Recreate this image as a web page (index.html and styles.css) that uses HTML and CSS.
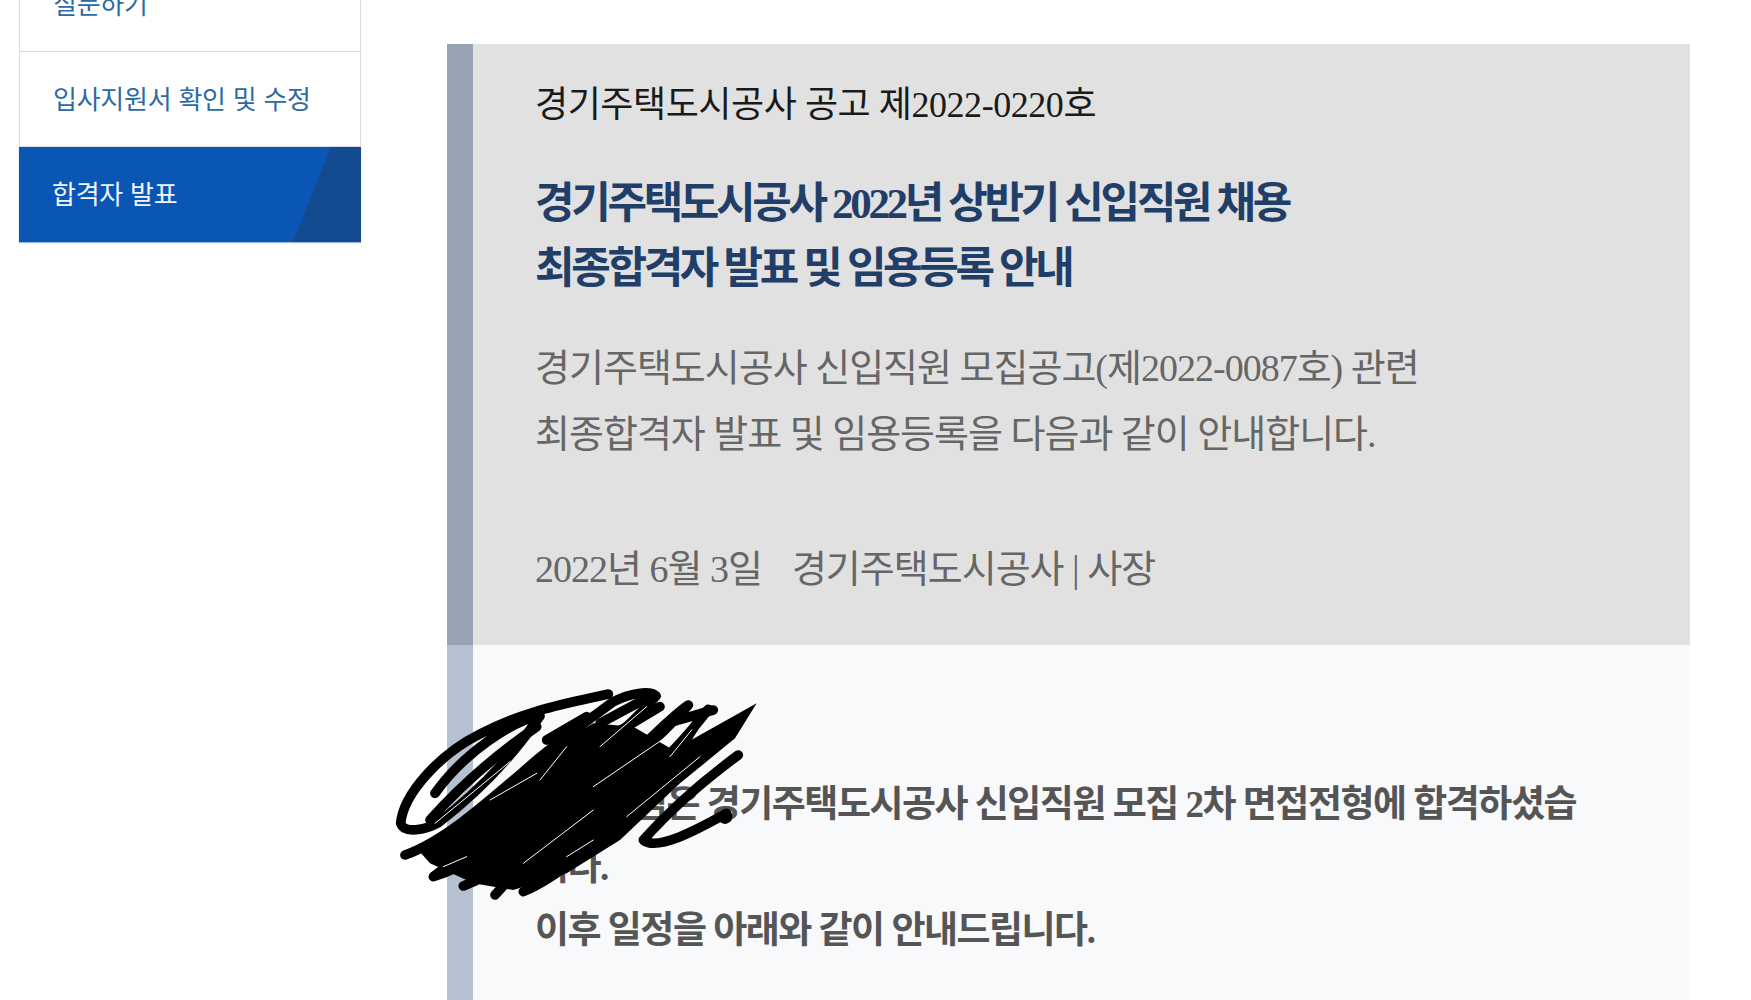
FILE: index.html
```html
<!DOCTYPE html>
<html lang="ko">
<head>
<meta charset="utf-8">
<title>합격자 발표</title>
<link rel="stylesheet" href="styles.css">
</head>
<body>
<div class="page">
  <nav class="side">
    <a class="side-item">질문하기</a>
    <a class="side-item">입사지원서 확인 및 수정</a>
    <a class="side-item active">합격자 발표
      <svg class="wedge" viewBox="0 0 68 95" preserveAspectRatio="none" aria-hidden="true"><polygon points="38,0 68,0 68,95 0,95"/></svg>
    </a>
  </nav>
  <main class="notice">
    <section class="head">
      <p class="num">경기주택도시공사 공고 제2022-0220호</p>
      <h1 class="title">경기주택도시공사 2022년 상반기 신입직원 채용<br>최종합격자 발표 및 임용등록 안내</h1>
      <p class="lead">경기주택도시공사 신입직원 모집공고(제2022-0087호) 관련<br>최종합격자 발표 및 임용등록을 다음과 같이 안내합니다.</p>
      <p class="date"><span class="date-day">2022년 6월 3일</span>경기주택도시공사 | 사장</p>
    </section>
    <section class="body">
      <p class="msg">○○○○&nbsp;&nbsp;님은 경기주택도시공사 신입직원 모집 2차 면접전형에 합격하셨습<br>니다.</p>
      <p class="msg">이후 일정을 아래와 같이 안내드립니다.</p>
    </section>
  </main>
  <svg class="scribble" viewBox="0 0 1500 1020" aria-hidden="true">
    <polygon points="150,610 110,565 200,510 330,410 520,260 640,190 760,200 880,270 1130,130 1065,235 900,370 720,540 560,640 400,690 280,670"/>
    <g fill="none" stroke="#000" stroke-width="29" stroke-linecap="round" stroke-linejoin="round">
      <path d="M685 102C560 130 440 150 300 222C180 282 70 400 62 490C72 522 135 510 175 488C290 400 400 285 480 168C400 180 250 280 165 400"/>
      <path d="M150 480C230 390 340 290 470 200"/>
      <path d="M75 585C200 540 330 420 470 300C560 225 640 170 700 125C750 100 810 90 828 108C760 190 640 290 520 380C400 470 280 560 160 650C230 630 300 590 420 500"/>
      <path d="M250 678C400 620 560 470 700 340C780 270 860 180 925 135C860 210 760 300 640 410C540 500 440 600 345 705"/>
      <path d="M430 695C560 640 700 500 830 380C880 320 930 200 985 148C900 260 800 350 700 450C640 510 590 560 560 590"/>
      <path d="M1075 285C960 370 870 450 790 540C830 575 950 510 1040 460"/>
      <path d="M500 240L620 170M660 190L800 115M860 190L1000 150M640 260L840 140"/>
    </g>
    <circle cx="1035" cy="470" r="22"/>
    <g fill="none" stroke="#fff" stroke-width="3" stroke-linecap="round">
      <path d="M165 490L390 305M330 420L470 340M480 360L560 260M660 260L800 140M640 380L860 230M740 470L960 290M190 620L260 590M430 610L640 450M560 590L640 540M870 290L935 210"/>
    </g>
  </svg>
</div>
</body>
</html>
```
FILE: styles.css
```css
html, body {
  margin: 0;
  padding: 0;
  height: 1000px;
  overflow: hidden;
  background: #fff;
}
body {
  font-family: "Liberation Serif", "Noto Sans CJK KR", serif;
}
p, h1 { margin: 0; }
.page {
  position: relative;
  display: flex;
  align-items: flex-start;
  height: 1000px;
  overflow: hidden;
}
.side {
  flex: none;
  width: 342px;
  margin: -43px 0 0 19px;
  display: flex;
  flex-direction: column;
  box-sizing: border-box;
  font-family: "Noto Sans CJK KR", sans-serif;
}
.side-item {
  position: relative;
  height: 95px;
  box-sizing: border-box;
  padding: 0 0 4px 33px;
  display: flex;
  align-items: center;
  font-size: 26px;
  letter-spacing: -0.25px;
  color: #2c6aa5;
  border: 1px solid #dcdcdc;
  border-top: 0;
}
.side-item.active {
  background: #0a56b4;
  color: #f2f6fb;
  border: 0;
  box-shadow: 0 1px 1px #9db8dc;
  overflow: hidden;
}
.wedge {
  position: absolute;
  right: 0;
  top: 0;
  width: 68px;
  height: 95px;
  fill: #134a90;
}
.notice {
  flex: none;
  width: 1243px;
  margin: 44px 0 0 86px;
}
.head {
  height: 601px;
  box-sizing: border-box;
  padding: 39px 0 0 62px;
  background: #e1e1e1;
  border-left: 26px solid #97a3b3;
}
.num {
  font-size: 36px;
  line-height: 44px;
  color: #1a1a1a;
  letter-spacing: -0.45px;
}
.title {
  margin-top: 44px;
  font-size: 43px;
  line-height: 65px;
  font-weight: 700;
  letter-spacing: -3.35px;
  color: #213e68;
}
.lead {
  margin-top: 34px;
  font-size: 38px;
  line-height: 66px;
  letter-spacing: -1px;
  color: #666;
}
.date {
  margin-top: 69px;
  font-size: 38px;
  line-height: 66px;
  letter-spacing: -1px;
  color: #666;
}
.date-day {
  margin-right: 30px;
}
.body {
  min-height: 400px;
  box-sizing: border-box;
  padding: 128px 0 0 62px;
  background: #f8f9fb;
  border-left: 26px solid #b5c0d1;
}
.msg {
  font-size: 37px;
  line-height: 63px;
  font-weight: 700;
  letter-spacing: -1.5px;
  color: #555;
}
.scribble {
  position: absolute;
  left: 380px;
  top: 660px;
  width: 500px;
  height: 340px;
  overflow: visible;
}
```
